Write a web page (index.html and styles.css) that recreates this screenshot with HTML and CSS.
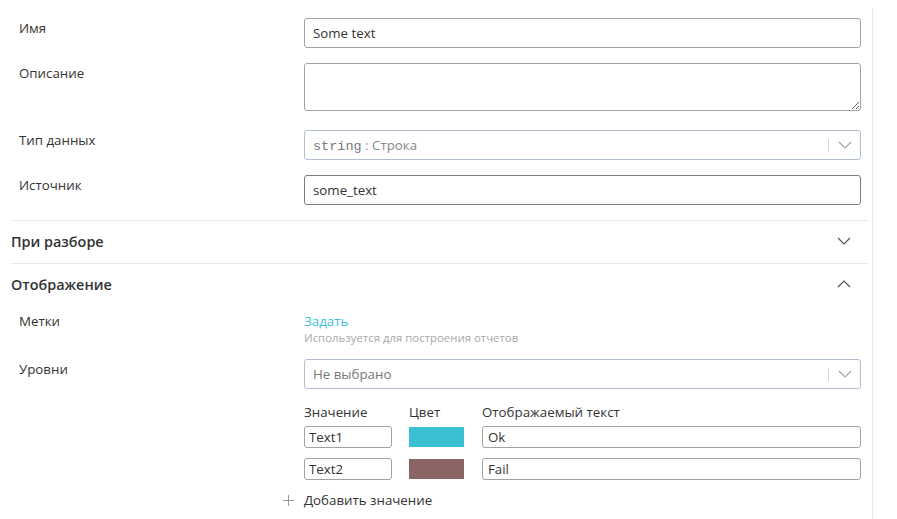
FILE: index.html
```html
<!DOCTYPE html>
<html lang="ru">
<head>
<meta charset="utf-8">
<link rel="stylesheet" href="styles.css">
</head>
<body>
<div class="panel">
  <div class="form">
    <div class="row">
      <div class="label">Имя</div>
      <div class="field"><input class="input" type="text" value="Some text"></div>
    </div>
    <div class="row">
      <div class="label">Описание</div>
      <div class="field"><textarea class="textarea"></textarea></div>
    </div>
    <div class="row">
      <div class="label">Тип данных</div>
      <div class="field">
        <div class="select select-type">
          <span class="select-value"><span class="mono">string</span><span class="sep"> : </span>Строка</span>
          <span class="select-divider"></span>
          <svg class="select-arrow" width="14" height="8" viewBox="0 0 14 8"><path d="M1 1 L7 7 L13 1" fill="none" stroke="#a0a0a0" stroke-width="1.1"/></svg>
        </div>
      </div>
    </div>
    <div class="row">
      <div class="label">Источник</div>
      <div class="field"><input class="input input-focus" type="text" value="some_text"></div>
    </div>
  </div>

  <div class="section">
    <div class="section-head">
      <span class="section-title">При разборе</span>
      <svg class="chev" width="14" height="8" viewBox="0 0 14 8"><path d="M1 1 L7 7 L13 1" fill="none" stroke="#555" stroke-width="1.2"/></svg>
    </div>
  </div>

  <div class="section">
    <div class="section-head">
      <span class="section-title">Отображение</span>
      <svg class="chev" width="14" height="8" viewBox="0 0 14 8"><path d="M1 7 L7 1 L13 7" fill="none" stroke="#555" stroke-width="1.2"/></svg>
    </div>
    <div class="section-body">
      <div class="row">
        <div class="label">Метки</div>
        <div class="field">
          <a class="link">Задать</a>
          <div class="hint">Используется для построения отчетов</div>
        </div>
      </div>
      <div class="row row-last">
        <div class="label">Уровни</div>
        <div class="field">
          <div class="select">
            <span class="select-value plain">Не выбрано</span>
            <span class="select-divider"></span>
            <svg class="select-arrow" width="14" height="8" viewBox="0 0 14 8"><path d="M1 1 L7 7 L13 1" fill="none" stroke="#a0a0a0" stroke-width="1.1"/></svg>
          </div>
          <div class="levels">
            <div class="lv-head">Значение</div>
            <div class="lv-head">Цвет</div>
            <div class="lv-head">Отображаемый текст</div>

            <input class="small-input" type="text" value="Text1">
            <div class="swatch swatch-cyan"></div>
            <input class="small-input wide" type="text" value="Ok">

            <input class="small-input" type="text" value="Text2">
            <div class="swatch swatch-brown"></div>
            <input class="small-input wide" type="text" value="Fail">
          </div>
          <div class="add">
            <svg class="plus" width="11" height="11" viewBox="0 0 11 11"><path d="M5.5 0 V11 M0 5.5 H11" stroke="#9a9a9a" stroke-width="1"/></svg>
            <span>Добавить значение</span>
          </div>
        </div>
      </div>
    </div>
  </div>
</div>
</body>
</html>
```

FILE: styles.css
```css
* { box-sizing: border-box; }
html, body {
  margin: 0;
  padding: 0;
  background: #fff;
}
body {
  font-family: "Open Sans", "Noto Sans", sans-serif;
  font-size: 13.3px;
  color: #333;
}
.panel {
  width: 873px;
  margin-top: 8px;
  height: 511px;
  padding: 10px 4px 0 11px;
  border-right: 1px solid #e4e7ee;
}
.form {
  padding: 0 7px 0 8px;
}
.row {
  display: grid;
  grid-template-columns: 285px 1fr;
  margin-bottom: 15px;
}
.label {
  line-height: 18px;
  padding-top: 1px;
  color: #333;
}
.input {
  display: block;
  width: 100%;
  height: 30px;
  border: 1px solid #a3a3a3;
  border-radius: 3px;
  padding: 0 8px;
  font-family: "Open Sans", "Noto Sans", sans-serif;
  font-size: 13.3px;
  color: #333;
  outline: none;
}
.input-focus {
  border-color: #7c7c7c;
}
.textarea {
  display: block;
  width: 100%;
  height: 48px;
  margin-bottom: 4px;
  border: 1px solid #a3a3a3;
  border-radius: 3px;
  font-family: "Open Sans", "Noto Sans", sans-serif;
  font-size: 13.3px;
  outline: none;
}
.select {
  display: flex;
  align-items: center;
  height: 30px;
  border: 1px solid #b3bfd0;
  border-radius: 3px;
  padding: 0 8px;
}
.select-value {
  flex: 1;
  color: #888;
  font-size: 13.3px;
}
.select-value.plain {
  color: #777;
}
.mono {
  font-family: "Liberation Mono", "DejaVu Sans Mono", monospace;
  font-size: 13.5px;
  color: #777;
}
.sep {
  color: #999;
}
.select-divider {
  width: 1px;
  height: 13px;
  background: #d0d0d0;
  margin-right: 9px;
}
.select-arrow {
  display: block;
}
.section {
  border-top: 1px solid #e6e6e6;
}
.section-head {
  display: flex;
  align-items: center;
  justify-content: space-between;
  height: 42px;
  padding: 0 17px 2px 0;
}
.section-title {
  font-size: 14.4px;
  font-weight: 600;
  color: #333;
}
.chev {
  display: block;
}
.section-body {
  padding: 5px 7px 0 8px;
}
.link {
  display: block;
  color: #3dbfd9;
  line-height: 20px;
  cursor: pointer;
}
.hint {
  font-size: 11.4px;
  line-height: 13px;
  color: #a8a8a8;
}
.row-last {
  margin-bottom: 0;
}
.levels {
  display: grid;
  grid-template-columns: 88px 56px 1fr;
  column-gap: 17px;
  row-gap: 10px;
  margin-top: 14px;
  align-items: center;
}
.lv-head {
  line-height: 18px;
  margin-bottom: -5px;
  color: #333;
}
.small-input {
  display: block;
  width: 100%;
  height: 22px;
  border: 1px solid #a3a3a3;
  border-radius: 3px;
  padding: 0 4px;
  font-family: "Open Sans", "Noto Sans", sans-serif;
  font-size: 13.3px;
  color: #333;
  outline: none;
}
.small-input.wide {
  padding: 0 5px;
}
.swatch {
  width: 55px;
  height: 20px;
}
.swatch-cyan { background: #3bbfd3; }
.swatch-brown { background: #8a6563; }
.add {
  display: flex;
  align-items: center;
  margin-top: 11px;
  margin-left: -21px;
  line-height: 18px;
  color: #333;
}
.plus {
  display: block;
  margin-right: 10px;
}
```
